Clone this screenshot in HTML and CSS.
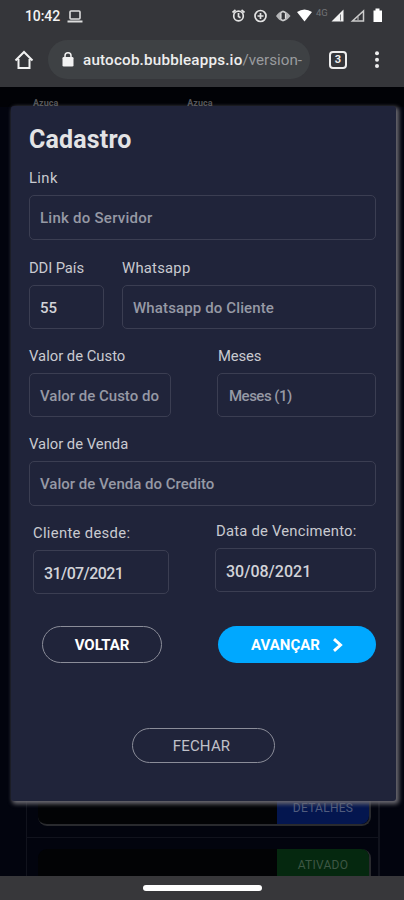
FILE: index.html
```html
<!DOCTYPE html>
<html lang="pt-BR">
<head>
<meta charset="utf-8">
<title>Cadastro</title>
<link rel="stylesheet" href="styles.css">
</head>
<body>
<div class="phone">
  <header class="chrome">
    <div class="status">
      <span class="clock">10:42</span>
      <svg class="laptop" width="16" height="13" viewBox="0 0 16 13" fill="none" stroke="#ddd"><rect x="3" y="1" width="10" height="8" rx="1" stroke-width="1.6"/><path d="M.5 11.5h15" stroke-width="2"/></svg>
      <svg class="signals" width="156" height="16" viewBox="230 8 156 16">
        <g fill="none" stroke="#e2e2e2" stroke-width="1.7">
          <circle cx="238.5" cy="16" r="4.800"/><path d="M238.500 13v3.500l2 1.200M232.500 12.500l3-2.500M241.500 10l3 2.500"/>
          <circle cx="260.500" cy="16" r="5.500"/><path d="M257.500 16h6M260.500 13v6"/>
        </g>
        <path d="M276 16q3-4.500 7-5.500 4 1 7.500 5.500-3.500 4.500-7.500 5.500-4-1-7-5.500z" fill="#b4b5b7"/><rect x="281" y="12" width="4.400" height="8" rx="1.500" fill="#35363a" stroke="#eee"/>
        <path d="M297 12q7.500-5 15 0l-7.500 9.500z" fill="#fff"/>
        <text x="316" y="16" class="net">4G</text>
        <path d="M343.500 9.500v12h-12z" fill="#f2f2f2"/><path d="M340.500 14.500v6" stroke="#77797c" stroke-width="1"/>
        <path d="M363.500 11v10h-11z" fill="none" stroke="#ccc" stroke-width="1.500"/><path d="M358 20v-3.500" stroke="#ccc"/>
        <path d="M373.500 10.500h2v-2h4v2h2.500v11.500h-8.500z" fill="#fff"/>
      </svg>
    </div>
    <div class="toolbar">
      <svg class="home" width="20" height="20" viewBox="0 0 20 20" fill="none" stroke="#f2f2f2" stroke-width="2"><path d="M1.500 10.500L10 2l8.500 8.500M4.500 9v9h11V9"/></svg>
      <div class="address">
        <svg width="12" height="15" viewBox="0 0 12 15"><rect x=".5" y="5" width="11" height="9.500" rx="1.300" fill="#f2f2f2"/><path d="M3 6V3.800a3 3 0 0 1 6 0V6" fill="none" stroke="#f2f2f2" stroke-width="1.500"/></svg>
        <span class="url">autocob.bubbleapps.io<span class="path">/version-</span></span>
      </div>
      <span class="tabs">3</span>
      <svg class="more" width="6" height="18" viewBox="0 0 6 18" fill="#eee"><circle cx="3" cy="2.300" r="2"/><circle cx="3" cy="8.700" r="2"/><circle cx="3" cy="15.100" r="2"/></svg>
    </div>
  </header>

  <main class="page">
    <div class="behind-top"><span>Azuca</span><span>Azuca</span></div>
    <div class="behind">
      <div class="item first"><span class="tag blue">DETALHES</span></div>
      <div class="item second"><span class="tag green">ATIVADO</span></div>
    </div>

    <form class="modal">
      <h1>Cadastro</h1>
      <div class="row link-row">
        <label class="full"><span class="t-link">Link</span><span class="box tall"><span class="v-link">Link do Servidor</span></span></label>
      </div>
      <div class="row phone-row">
        <label class="ddi"><span class="t-ddi">DDI País</span><span class="box value"><span>55</span></span></label>
        <label class="full"><span class="t-whats">Whatsapp</span><span class="box"><span class="v-whats">Whatsapp do Cliente</span></span></label>
      </div>
      <div class="row cost-row">
        <label class="cost"><span class="t-cost">Valor de Custo</span><span class="box"><span>Valor de Custo do</span></span></label>
        <label class="months"><span class="t-months">Meses</span><span class="box"><span class="v-months">Meses (1)</span></span></label>
      </div>
      <div class="row sale-row">
        <label class="full"><span class="t-sale">Valor de Venda</span><span class="box tall"><span>Valor de Venda do Credito</span></span></label>
      </div>
      <div class="row dates">
        <label class="since"><span class="t-since">Cliente desde:</span><span class="box value"><span class="v-date">31/07/2021</span></span></label>
        <label class="due"><span class="t-due">Data de Vencimento:</span><span class="box value"><span class="v-due">30/08/2021</span></span></label>
      </div>
      <div class="actions">
        <button type="button" class="btn back">VOLTAR</button>
        <button type="button" class="btn next"><span>AVANÇAR</span><svg width="11" height="14" viewBox="0 0 11 14" fill="none" stroke="#fff" stroke-width="3"><path d="M2 1.200L8.500 7 2 12.800"/></svg></button>
      </div>
      <button type="button" class="btn close">FECHAR</button>
    </form>
  </main>
  <footer class="nav"><span class="pill"></span></footer>
</div>
</body>
</html>
```
FILE: styles.css
```css
* { box-sizing: border-box; }
body { margin: 0; background: #000; font-family: Roboto, "Liberation Sans", sans-serif; }
.phone { width: 404px; height: 900px; display: flex; flex-direction: column; overflow: hidden; }
.chrome { height: 87px; background: #35363a; flex: none; }
.status { height: 32px; display: flex; align-items: center; padding: 0 18px 0 25px; }
.clock { font-size: 14px; font-weight: 500; color: #f4f4f4; letter-spacing: -.1px; }
.laptop { margin-left: 7px; }
.signals { margin-left: auto; }
.net { font-size: 9.5px; fill: #717377; }
.toolbar { height: 55px; display: flex; align-items: center; padding: 0 24px 0 14px; }
.home { flex: none; }
.address { margin-left: 14px; width: 262px; height: 39px; border-radius: 20px; background: #3e4144; display: flex; align-items: center; padding-left: 14px; white-space: nowrap; }
.url { margin-left: 9px; width: 220px; overflow: hidden; font-size: 15.2px; font-weight: 500; color: #eee; letter-spacing: .2px; }
.path { color: #999b9e; font-weight: 400; letter-spacing: 0; }
.tabs { margin-left: 19px; width: 18px; height: 18px; border: 2px solid #eee; border-radius: 4px; color: #eee; font-size: 11px; line-height: 14px; font-weight: 700; text-align: center; }
.more { margin-left: auto; }

.page { position: relative; flex: 1; display: flex; flex-direction: column; background: #02040e; }
.behind-top { height: 20px; background: #010206; padding: 11px 0 0 33px; display: flex; gap: 129px; font-size: 9px; line-height: 11px; font-weight: 700; color: #55565a; }
.behind { position: relative; margin-top: auto; margin-left: 26px; width: 354px; height: 82px; border: solid #11131d; border-width: 0 2px 0 1px; overflow: hidden; }
.behind::after { content: ""; position: absolute; left: 0; right: 0; top: 43px; height: 1px; background: #11131d; }
.item { margin: 0 7px 0 11px; display: flex; justify-content: flex-end; background: #020305; border: solid #292a2e; border-width: 0 2px 2px 0; }
.first { height: 32px; border-radius: 0 0 9px 9px; }
.second { height: 35px; margin-top: 23px; border-width: 0 2px 0 0; border-radius: 9px 9px 0 0; }
.tag { width: 92px; display: flex; align-items: center; justify-content: center; font-size: 12px; letter-spacing: .25px; }
.blue { background: #04164f; color: #515c7d; border-radius: 0 0 8px 0; padding-bottom: 3px; }
.green { background: #05280f; color: #3d5744; border-radius: 0 8px 0 0; padding-bottom: 4px; }

.modal { position: absolute; left: 11px; top: 19px; width: 385px; height: 695px; padding: 16px 20px 0 18px; background: #20243a; border-radius: 3px; box-shadow: 2px 2px 4px 1px #6a6970; }
h1 { margin: 0; height: 34px; font-size: 25px; line-height: 36px; font-weight: 700; color: #e3e3e5; letter-spacing: .15px; }
.row { display: flex; white-space: nowrap; }
label { display: flex; flex-direction: column; font-size: 14.8px; line-height: 21px; color: #c9cad0; }
label > span:first-child { height: 27px; }
.full { flex: 1; }
.box { height: 44px; border: 1px solid #3b3e52; border-radius: 5px; padding: 2px 10px 0; display: flex; align-items: center; font-size: 15px; font-weight: 500; color: #9699a5; overflow: hidden; }
.tall { height: 45px; }
.value { color: #d2d3d8; }
.link-row { margin-top: 12px; }
.phone-row { margin-top: 18px; gap: 18px; }
.ddi { width: 75px; }
.cost-row { margin-top: 17px; justify-content: space-between; }
.cost { width: 142px; }
.months { width: 159px; }
.sale-row { margin-top: 17px; }
.dates { margin: 15px 0 0 4px; justify-content: space-between; align-items: flex-start; }
.since { width: 136px; padding-top: 2px; }
.due { width: 161px; }
.t-link { letter-spacing: .4px; }
.t-ddi { letter-spacing: -.1px; }
.t-whats { letter-spacing: .25px; }
.t-cost, .t-sale { letter-spacing: 0; }
.t-months { letter-spacing: -.1px; padding-left: 1px; }
.t-since { letter-spacing: .32px; }
.t-due { letter-spacing: .22px; padding-left: 1px; }
.v-link { letter-spacing: .25px; }
.v-whats { letter-spacing: .13px; }
.v-months { letter-spacing: -.5px; padding-left: 1px; }
.v-date { font-size: 16px; letter-spacing: -.6px; }
.v-due { font-size: 16px; letter-spacing: 0; }

.actions { display: flex; justify-content: space-between; margin: 32px 0 0 13px; }
.btn { height: 37px; border-radius: 19px; border: 1px solid #8b8d99; background: transparent; color: #fff; font: 700 15px Roboto, sans-serif; padding: 0; display: flex; align-items: center; justify-content: center; }
.back { width: 120px; }
.next { width: 158px; background: #00a8ff; border: 0; gap: 12px; }
.close { width: 143px; height: 35px; margin: 65px 0 0 103px; padding: 1px 4px 0 0; font-weight: 400; letter-spacing: .2px; color: #c0c1c9; }

.nav { height: 24px; flex: none; background: #37373a; display: flex; align-items: center; justify-content: center; }
.pill { width: 119px; height: 6px; border-radius: 3px; background: #fff; }
```
